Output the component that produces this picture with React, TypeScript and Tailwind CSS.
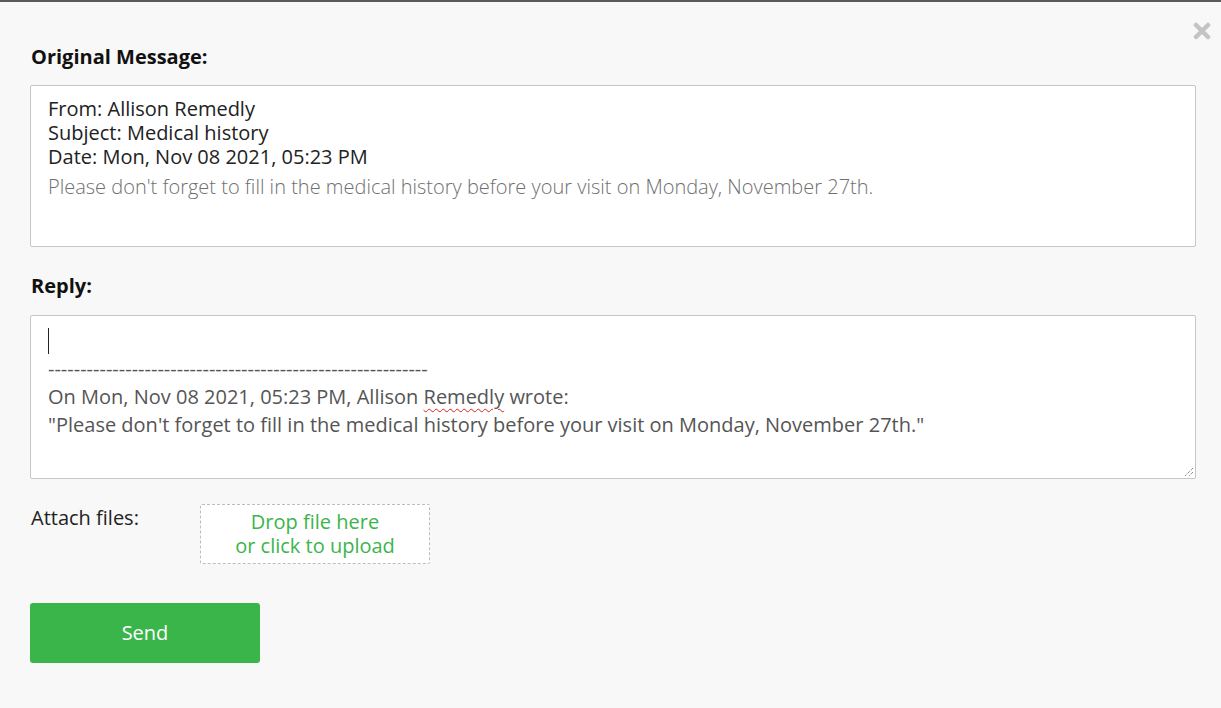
import { useState } from "react";

export default function App() {
  const [files] = useState<string[]>([]);

  return (
    <div className="min-h-screen bg-[#f8f8f8] border-t-2 border-[#5a5a5a] font-['Open_Sans',sans-serif] text-[#222]">
      <div className="relative pl-[30px] pr-[25px] pt-[39px] pb-10">
        <button className="absolute right-[10px] top-[20px] text-[#c4c4c4]">
          <svg width="18" height="18" viewBox="0 0 18 18">
            <path d="M3 3 L15 15 M15 3 L3 15" stroke="currentColor" strokeWidth="4.5" strokeLinecap="round" />
          </svg>
        </button>

        <h2 className="text-[20px] font-bold leading-[32px] text-[#111] pl-[1px]">Original Message:</h2>
        <div className="mt-[12px] h-[162px] bg-white border border-[#c6c6c6] rounded-[2px] px-[17px] pt-[11px] text-[20px] leading-[24px]">
          <div>From: Allison Remedly</div>
          <div>Subject: Medical history</div>
          <div>Date: Mon, Nov 08 2021, 05:23 PM</div>
          <div className="mt-[6px] font-light text-[#6f6f6f]">
            Please don't forget to fill in the medical history before your visit on Monday, November 27th.
          </div>
        </div>

        <h2 className="mt-[23px] text-[20px] font-bold leading-[32px] text-[#111] pl-[1px]">Reply:</h2>
        <div className="relative mt-[13px] h-[164px] bg-white border border-[#c6c6c6] rounded-[2px] px-[17px] pt-[11px] text-[20px] leading-[28px] text-[#555]">
          <div className="h-[28px] flex items-center">
            <span className="block w-px h-[26px] bg-[#222]" />
          </div>
          <div>-----------------------------------------------------------</div>
          <div>
            On Mon, Nov 08 2021, 05:23 PM, Allison{" "}
            <span className="underline decoration-wavy decoration-[#e02020] decoration-1 underline-offset-[4px]">Remedly</span>{" "}
            wrote:
          </div>
          <div>"Please don't forget to fill in the medical history before your visit on Monday, November 27th."</div>
          <svg className="absolute right-[1px] bottom-[1px]" width="10" height="10" viewBox="0 0 10 10">
            <path d="M9 1 L1 9 M9 5 L5 9" stroke="#555" strokeWidth="1" strokeDasharray="1 1" />
          </svg>
        </div>

        <div className="mt-[25px] flex items-start">
          <div className="w-[170px] pl-[1px] text-[20px] leading-[28px] text-[#222]">Attach files:</div>
          <div className="w-[230px] h-[60px] bg-white border border-dashed border-[#bdbdbd] rounded-[2px] flex flex-col items-center justify-center text-[20px] leading-[24px] text-[#3cb44b]">
            <span>Drop file here</span>
            <span>or click to upload</span>
          </div>
          {files.length > 0 && <div className="ml-4 text-sm">{files.join(", ")}</div>}
        </div>

        <button className="mt-[39px] w-[230px] h-[60px] bg-[#3ab54a] rounded-[3px] text-white text-[20px]">
          Send
        </button>
      </div>
    </div>
  );
}
